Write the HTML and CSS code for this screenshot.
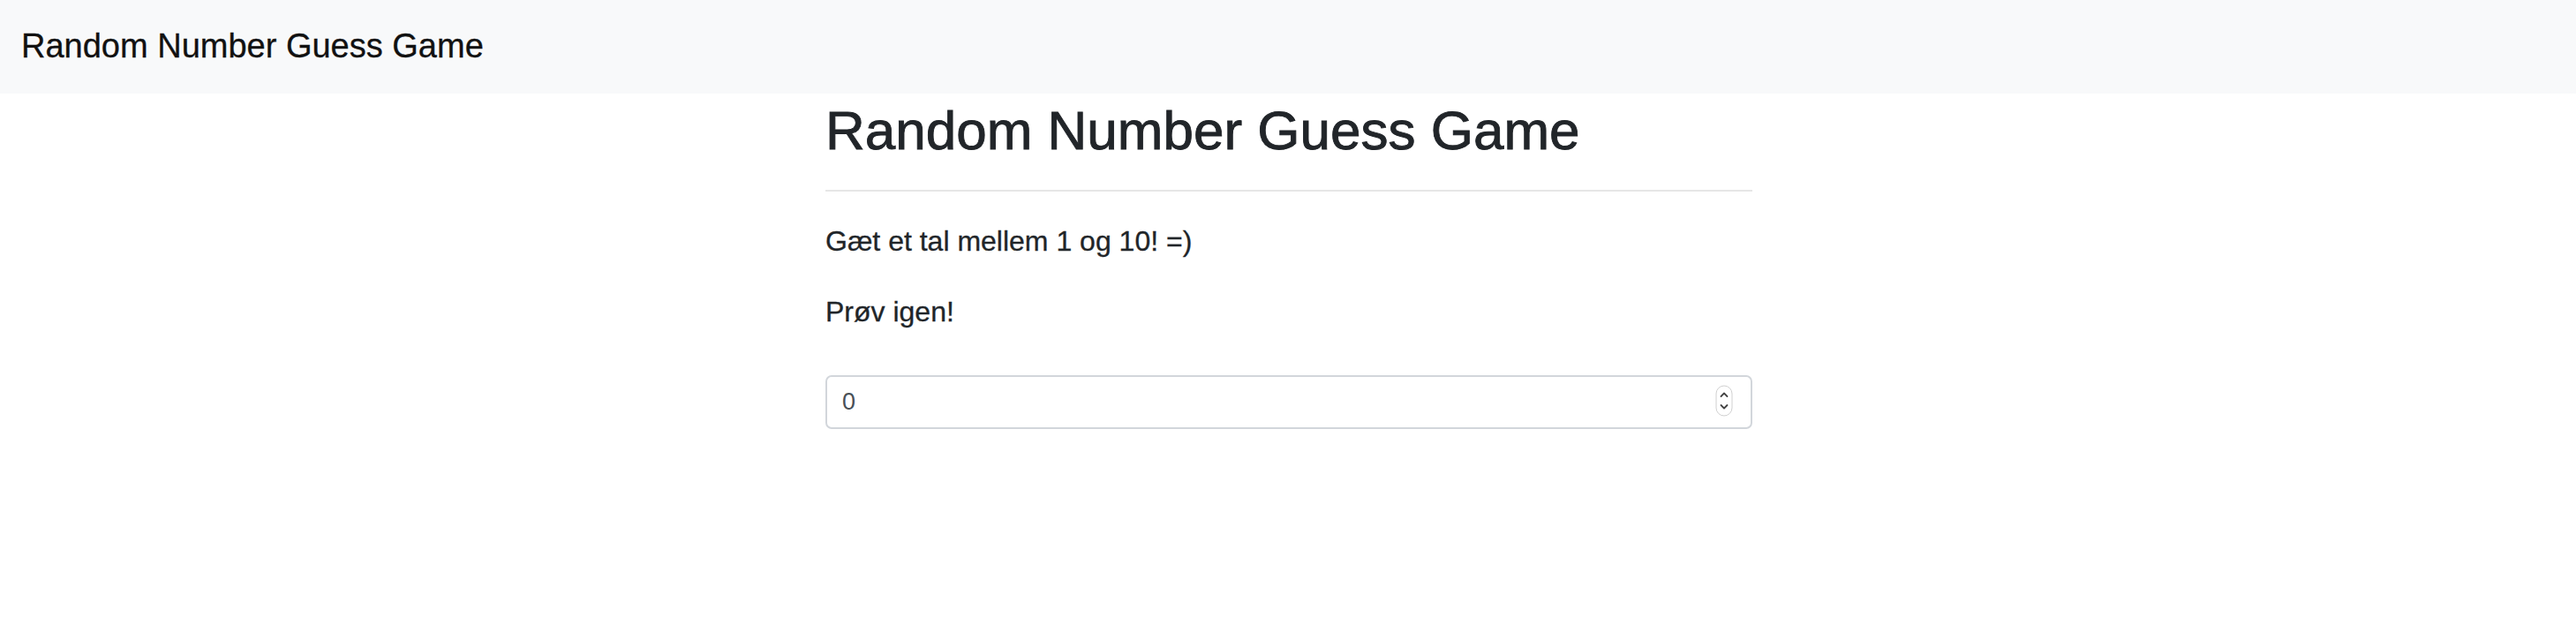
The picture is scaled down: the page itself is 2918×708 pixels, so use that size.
FILE: index.html
```html
<!DOCTYPE html>
<html lang="da">
<head>
<meta charset="utf-8">
<title>Random Number Guess Game</title>
<link rel="stylesheet" href="styles.css">
</head>
<body>
<nav class="navbar">
  <span class="brand">Random Number Guess Game</span>
</nav>
<main class="container">
  <h1 class="title">Random Number Guess Game</h1>
  <hr class="divider">
  <p class="text">Gæt et tal mellem 1 og 10! =)</p>
  <p class="text">Prøv igen!</p>
  <div class="field">
    <input class="number-input" type="text" value="0">
    <span class="spinner">
      <svg width="20" height="36" viewBox="0 0 20 36">
        <rect x="1" y="1" width="18" height="34" rx="9" ry="9" fill="#fff" stroke="#d0d0d0" stroke-width="1"/>
        <path d="M6.5 13 L10 9.5 L13.5 13" fill="none" stroke="#444" stroke-width="1.8" stroke-linecap="round" stroke-linejoin="round"/>
        <path d="M6.5 23 L10 26.5 L13.5 23" fill="none" stroke="#444" stroke-width="1.8" stroke-linecap="round" stroke-linejoin="round"/>
      </svg>
    </span>
  </div>
</main>
</body>
</html>
```
FILE: styles.css
```css
html, body {
  margin: 0;
  padding: 0;
  background: #fff;
}
body {
  font-family: "Liberation Sans", Arial, sans-serif;
  color: #212529;
}
.navbar {
  height: 106px;
  background: #f8f9fa;
  display: flex;
  align-items: center;
  padding: 0 24px;
  box-sizing: border-box;
}
.brand {
  font-size: 38px;
  line-height: 1;
  color: #111;
  margin-top: -3px;
  -webkit-text-stroke: 0.3px #111;
}
.container {
  width: 1050px;
  margin: 0 auto;
  padding: 5px 0 0 2px;
}
.title {
  margin: 0;
  font-size: 62px;
  line-height: 74px;
  font-weight: 500;
  color: #212529;
  -webkit-text-stroke: 0.9px #212529;
}
.divider {
  margin: 30px 0 32px;
  border: 0;
  border-top: 2px solid #e6e6e6;
  height: 0;
}
.text {
  margin: 0 0 32px;
  font-size: 32px;
  line-height: 48px;
  -webkit-text-stroke: 0.3px #212529;
}
.field {
  position: relative;
  margin-top: 48px;
}
.number-input {
  display: block;
  width: 100%;
  box-sizing: border-box;
  height: 61px;
  padding: 0 17px;
  font-family: "Liberation Sans", Arial, sans-serif;
  font-size: 27px;
  color: #495057;
  border: 2px solid #d2d6db;
  border-radius: 7px;
  background: #fff;
  outline: none;
}
.spinner {
  position: absolute;
  right: 22px;
  top: 11px;
  display: block;
  width: 20px;
  height: 36px;
}
.spinner svg {
  display: block;
}
```
